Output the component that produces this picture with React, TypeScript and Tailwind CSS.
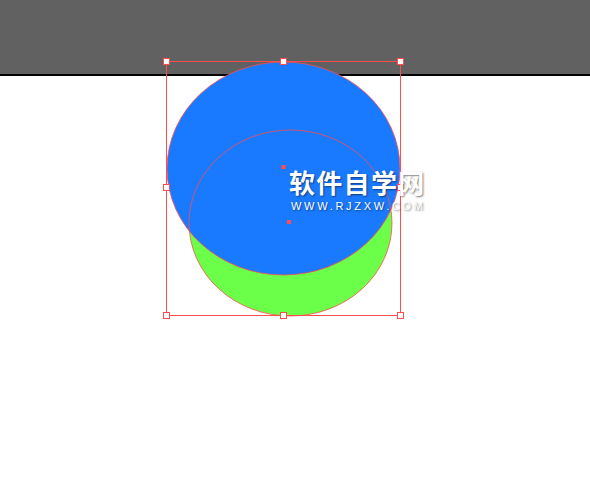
export default function App() {
  const stroke = "#ff4d4d";
  const handles: [number, number][] = [
    [166.5, 61.5],
    [283.5, 61.5],
    [400.5, 61.5],
    [166.5, 187.5],
    [400.5, 187.5],
    [166.5, 315.5],
    [283.5, 315.5],
    [400.5, 315.5],
  ];

  return (
    <div className="relative w-[590px] h-[477px] overflow-hidden bg-white">
      {/* top toolbar strip */}
      <div className="h-[76px] bg-[#616161] border-b-2 border-black" />

      {/* drawing canvas */}
      <svg
        className="absolute inset-0"
        width={590}
        height={477}
        viewBox="0 0 590 477"
      >
        <ellipse cx={290.5} cy={223} rx={101.5} ry={93} fill="#6cff4a" />
        <ellipse
          cx={283.5}
          cy={168.5}
          rx={116.5}
          ry={106.5}
          fill="#1a7aff"
          stroke={stroke}
          strokeWidth={0.8}
        />
        <ellipse
          cx={290.5}
          cy={223}
          rx={101.5}
          ry={93}
          fill="none"
          stroke={stroke}
          strokeWidth={0.8}
        />
        <rect
          x={166.5}
          y={61.5}
          width={234}
          height={254}
          fill="none"
          stroke={stroke}
          strokeWidth={1}
        />
        {handles.map(([x, y], i) => (
          <rect
            key={i}
            x={x - 3}
            y={y - 3}
            width={6}
            height={6}
            fill="#fff"
            stroke={stroke}
            strokeWidth={1}
          />
        ))}
        <rect x={281.5} y={165} width={4} height={4} fill={stroke} />
        <rect x={287} y={220} width={4} height={4} fill={stroke} />
      </svg>

      {/* watermark */}
      <div className="absolute left-[289px] top-[164px] flex flex-col items-start text-white [text-shadow:1px_1px_2px_rgba(0,0,0,0.5)]">
        <span className="text-[26px] leading-[36px] font-bold tracking-[1.3px] font-['Noto_Sans_CJK_SC',sans-serif]">
          软件自学网
        </span>
        <span className="mt-[1px] ml-[2px] text-[11px] leading-[11px] tracking-[2.7px] font-['Liberation_Sans',sans-serif]">
          WWW.RJZXW.COM
        </span>
      </div>
    </div>
  );
}
